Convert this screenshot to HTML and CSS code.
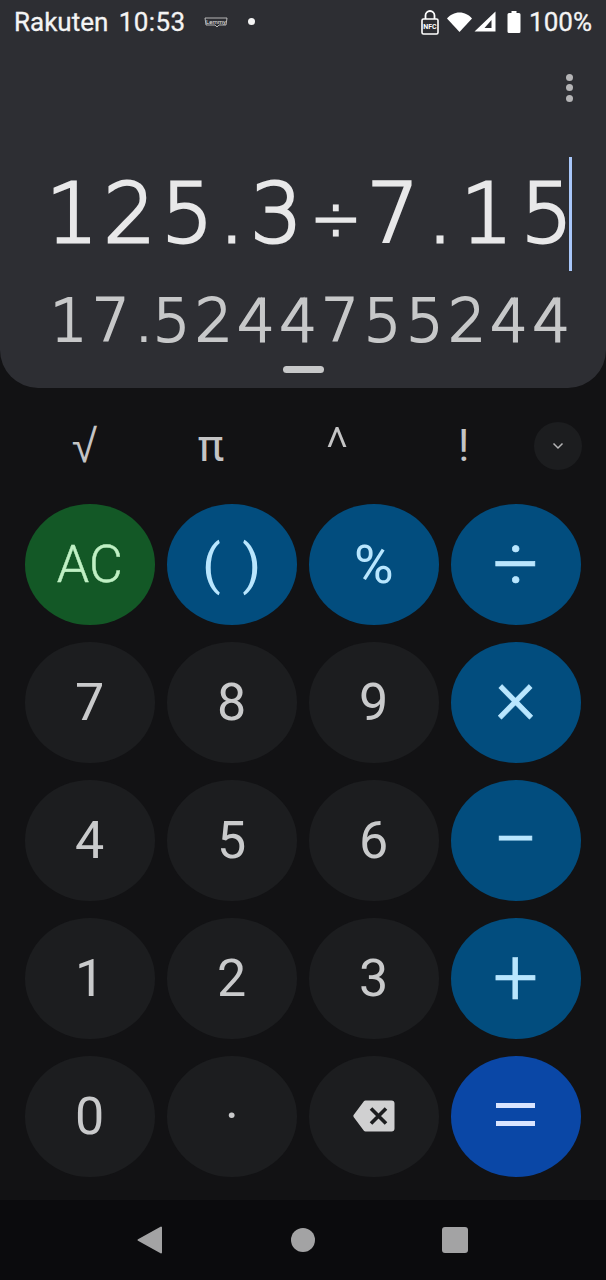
FILE: index.html
```html
<!DOCTYPE html>
<html lang="en">
<head>
    <meta charset="UTF-8">
    <meta name="viewport" content="width=device-width, initial-scale=1.0">
    <title>Calculator</title>
    <link rel="stylesheet" href="styles.css">
</head>
<body>
    <div class="display">
        <div class="status-bar">
            <div class="status-left">
                <span class="carrier">Rakuten</span>
                <span class="clock">10:53</span>
                <svg class="notif-icon" width="26" height="14" viewBox="0 0 26 14">
                    <path d="M2 3h22l-1 7h-7l-2 2-2-2H3z" fill="none" stroke="#d8d8d8" stroke-width="0.8"/>
                    <text x="13" y="8.5" text-anchor="middle" class="notif-text">Lemmy</text>
                </svg>
                <span class="notif-dot"></span>
            </div>
            <div class="status-right">
                <svg class="nfc" width="20" height="26" viewBox="0 0 20 26">
                    <path d="M5.500 10V6.500a4.500 4.500 0 0 1 9 0V10" fill="none" stroke="#fff" stroke-width="1.800"/>
                    <rect x="2" y="10" width="16" height="15" rx="1.500" fill="#2d2e33" stroke="#fff" stroke-width="1.600"/>
                    <text x="10" y="20" text-anchor="middle" class="nfc-text">NFC</text>
                </svg>
                <svg class="wifi" width="25" height="20" viewBox="0 0 25 20">
                    <path d="M0 6.500C3 3 7.500 .5 12.500 .5S22 3 25 6.500L12.500 20z" fill="#fff"/>
                </svg>
                <svg class="signal" width="22" height="21" viewBox="0 0 22 21">
                    <path d="M21.500 .5V20.500H.5zM17.500 9l-7 8h7z" fill="#fff" fill-rule="evenodd"/>
                </svg>
                <svg class="battery" width="14" height="22" viewBox="0 0 14 22">
                    <path d="M4.500 0h5v2h2.500a1.500 1.500 0 0 1 1.500 1.500V20.500a1.500 1.500 0 0 1-1.500 1.500H2a1.500 1.500 0 0 1-1.500-1.500V3.500A1.500 1.500 0 0 1 2 2h2.500z" fill="#fff"/>
                </svg>
                <span class="battery-level">100%</span>
            </div>
        </div>

        <div class="menu-row">
            <div class="menu-dots"><span></span><span></span><span></span></div>
        </div>

        <div class="expression">
            <span>125.3</span><span class="expression-divide">÷</span><span class="expression-tail">7.15</span><span class="cursor"></span>
        </div>
        <div class="result">17<span class="result-dot">.</span>5244755244</div>
        <div class="handle"></div>
    </div>

    <div class="functions">
        <span class="fn fn-root">√</span>
        <span class="fn">π</span>
        <span class="fn fn-caret">^</span>
        <span class="fn">!</span>
        <span class="fn-toggle">
            <svg width="12" height="8" viewBox="0 0 12 8"><path d="M1.500 1.500 6 6l4.500-4.500" fill="none" stroke="#b5b5b6" stroke-width="1.500"/></svg>
        </span>
    </div>

    <div class="keypad">
        <button class="key key-clear">AC</button>
        <button class="key key-op key-parens">( )</button>
        <button class="key key-op">%</button>
        <button class="key key-op key-big">÷</button>
        <button class="key">7</button>
        <button class="key">8</button>
        <button class="key">9</button>
        <button class="key key-op key-big key-times">×</button>
        <button class="key">4</button>
        <button class="key">5</button>
        <button class="key">6</button>
        <button class="key key-op key-big">−</button>
        <button class="key">1</button>
        <button class="key">2</button>
        <button class="key">3</button>
        <button class="key key-op key-big">+</button>
        <button class="key">0</button>
        <button class="key">·</button>
        <button class="key">
            <svg width="42" height="32" viewBox="0 0 42 32">
                <path d="M12.500 .5H38.500a3 3 0 0 1 3 3V28.500a3 3 0 0 1-3 3H12.500a2 2 0 0 1-1.600-.8L.8 17.200a2 2 0 0 1 0-2.400L10.900 1.300a2 2 0 0 1 1.600-.8z" fill="#d0d0d1"/>
                <path d="M18 8.500l15 15M33 8.500l-15 15" stroke="#1c1d1f" stroke-width="3.600" fill="none"/>
            </svg>
        </button>
        <button class="key key-equals">
            <span class="equals-bars"><span></span><span></span></span>
        </button>
    </div>

    <div class="nav-bar">
        <svg width="26" height="28" viewBox="0 0 26 28">
            <path d="M24 1.500V26.500L1.500 14z" fill="#a3a3a4" stroke="#a3a3a4" stroke-width="2" stroke-linejoin="round"/>
        </svg>
        <span class="nav-home"></span>
        <span class="nav-recent"></span>
    </div>
</body>
</html>
```

FILE: styles.css
```css
/* Page */
body {
    margin: 0;
    width: 606px;
    height: 1280px;
    overflow: hidden;
    display: flex;
    flex-direction: column;
    background-color: #121214;
    font-family: Roboto, sans-serif;
}

/* Display panel */
.display {
    height: 388px;
    box-sizing: border-box;
    flex-shrink: 0;
    background-color: #2d2e33;
    border-radius: 0 0 38px 38px;
    display: flex;
    flex-direction: column;
}

.status-bar {
    height: 43px;
    padding: 0 14px;
    display: flex;
    align-items: center;
    justify-content: space-between;
    color: #f4f4f4;
    font-size: 26px;
    -webkit-text-stroke: 0.3px #f4f4f4;
}

.status-left,
.status-right {
    display: flex;
    align-items: center;
}

.carrier {
    margin-right: 10.500px;
}

.clock {
    letter-spacing: 0.4px;
}

.notif-icon {
    margin-left: 17px;
}

.notif-text {
    font-size: 6px;
    fill: #e0e0e0;
    -webkit-text-stroke: 0;
}

.notif-dot {
    width: 7px;
    height: 7px;
    margin-left: 19px;
    border-radius: 50%;
    background-color: #f4f4f4;
}

.status-right .nfc {
    margin-right: 7px;
}

.status-right .wifi {
    margin-right: 2px;
}

.status-right .signal {
    margin-right: 11px;
}

.status-right .battery {
    margin-right: 8px;
}

.nfc-text {
    font-size: 7px;
    font-weight: 700;
    fill: #fff;
    -webkit-text-stroke: 0;
}

/* Overflow menu */
.menu-row {
    display: flex;
    justify-content: flex-end;
    padding: 31px 33px 0 0;
}

.menu-dots {
    display: flex;
    flex-direction: column;
    gap: 3.300px;
}

.menu-dots span {
    width: 7px;
    height: 7px;
    border-radius: 50%;
    background-color: #b4b4b6;
}

/* Expression and result */
.expression {
    margin-top: 55px;
    height: 114px;
    padding-left: 46px;
    display: flex;
    align-items: center;
    color: #e8e8e9;
    font-family: "DejaVu Sans", sans-serif;
    font-weight: 200;
    font-size: 82px;
    letter-spacing: 5.400px;
    -webkit-text-stroke: 2.800px #e8e8e9;
}

.expression-divide {
    font-size: 60px;
    letter-spacing: 6px;
    margin-left: 3px;
    position: relative;
    top: 4px;
}

.expression-tail {
    letter-spacing: 7.800px;
}

.cursor {
    width: 3px;
    height: 114px;
    margin-left: -12px;
    background-color: #a8c7fa;
}

.result {
    margin-top: 20px;
    padding-left: 50px;
    color: #c7c8c9;
    font-family: "DejaVu Sans", sans-serif;
    font-weight: 200;
    font-size: 59px;
    line-height: 60px;
    letter-spacing: 4.650px;
    -webkit-text-stroke: 2.100px #c7c8c9;
}

.result-dot {
    letter-spacing: -0.300px;
}

.handle {
    width: 41px;
    height: 7px;
    margin: 15px auto 0;
    border-radius: 4px;
    background-color: #c7c8c9;
}

/* Scientific function row */
.functions {
    height: 116px;
    flex-shrink: 0;
    box-sizing: border-box;
    padding: 0 24px 0 21px;
    display: flex;
    align-items: center;
}

.fn {
    width: 126.500px;
    text-align: center;
    color: #c4c4c5;
    font-size: 44px;
}

.fn-root {
    font-family: "DejaVu Sans", sans-serif;
    font-weight: 200;
    font-size: 46px;
}

.fn-caret {
    font-size: 56px;
    font-weight: 300;
    line-height: 56px;
    padding-top: 4px;
}

.fn-toggle {
    width: 48px;
    height: 48px;
    margin-left: 7px;
    border-radius: 50%;
    background-color: #1c1d1f;
    display: flex;
    align-items: center;
    justify-content: center;
}

/* Keypad */
.keypad {
    padding: 0 0 0 24.700px;
    display: grid;
    grid-template-columns: repeat(4, 130px);
    grid-auto-rows: 120.500px;
    column-gap: 12px;
    row-gap: 17.500px;
}

.key {
    padding: 0;
    border: none;
    border-radius: 50%;
    background-color: #1c1d1f;
    color: #c9cacb;
    font-family: Roboto, sans-serif;
    font-size: 52px;
    display: flex;
    align-items: center;
    justify-content: center;
}

.key-clear {
    background-color: #135826;
    color: #c0f0c4;
    font-weight: 300;
    -webkit-text-stroke: 0.4px #c0f0c4;
}

.key-op {
    background-color: #024d7e;
    color: #b9e6fe;
    font-size: 54px;
}

.key-parens {
    word-spacing: 8px;
}

.key-big {
    font-size: 80px;
    font-weight: 300;
    -webkit-text-stroke: 0.7px #b9e6fe;
    padding-bottom: 1px;
}

.key-times {
    padding-bottom: 12px;
}

.key-equals {
    background-color: #0a47a6;
}

.equals-bars {
    display: flex;
    flex-direction: column;
    gap: 13px;
    margin-bottom: 3px;
}

.equals-bars span {
    width: 39px;
    height: 5px;
    background-color: #d9e5ff;
}

/* Navigation bar */
.nav-bar {
    margin-top: 23.500px;
    height: 80px;
    flex-shrink: 0;
    padding-left: 137px;
    display: flex;
    align-items: center;
    background-color: #0b0b0d;
}

.nav-home {
    width: 24px;
    height: 24px;
    margin-left: 128px;
    border-radius: 50%;
    background-color: #a3a3a4;
}

.nav-recent {
    width: 26px;
    height: 26px;
    margin-left: 127px;
    border-radius: 3px;
    background-color: #a3a3a4;
}
```
